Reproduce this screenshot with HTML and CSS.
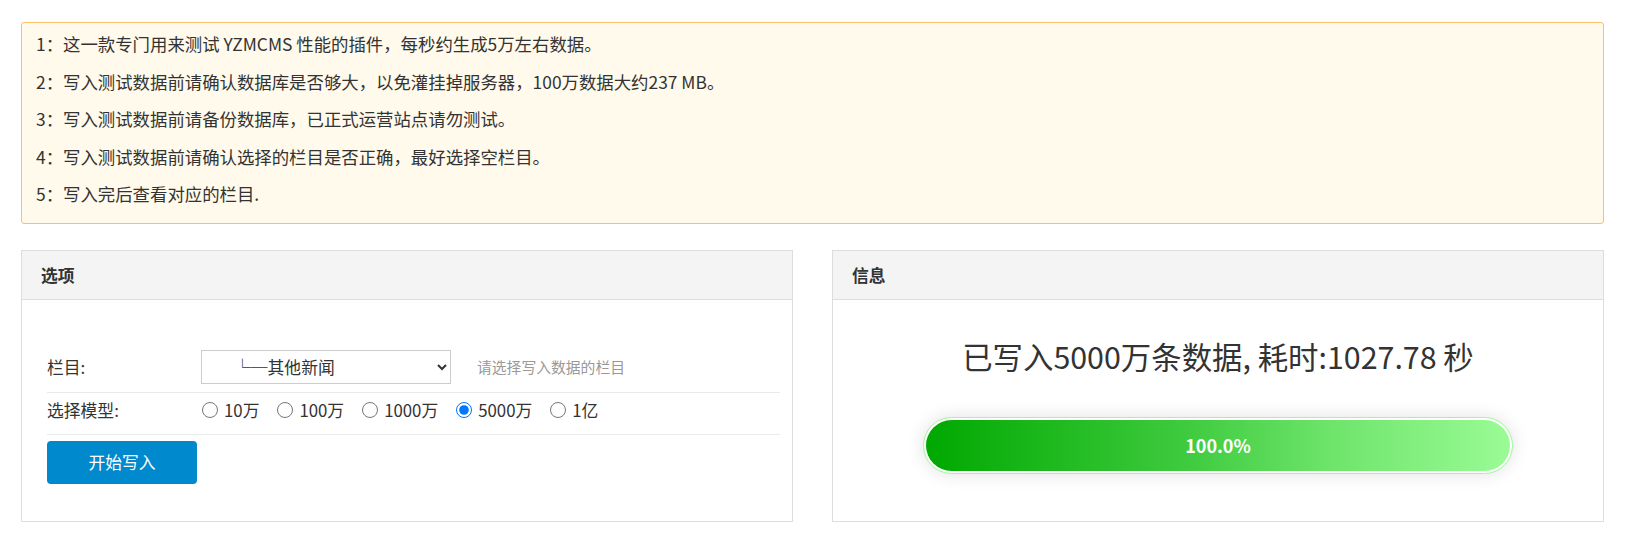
FILE: index.html
```html
<!DOCTYPE html>
<html lang="zh-CN">
<head>
<meta charset="utf-8">
<title>测试数据</title>
<link rel="stylesheet" href="styles.css">
</head>
<body>
<div class="page">
  <div class="alert">
    <p>1：这一款专门用来测试 YZMCMS 性能的插件，每秒约生成5万左右数据。</p>
    <p>2：写入测试数据前请确认数据库是否够大，以免灌挂掉服务器，100万数据大约237 MB。</p>
    <p>3：写入测试数据前请备份数据库，已正式运营站点请勿测试。</p>
    <p>4：写入测试数据前请确认选择的栏目是否正确，最好选择空栏目。</p>
    <p>5：写入完后查看对应的栏目.</p>
  </div>
  <div class="grid">
    <div class="panel">
      <div class="panel-head">选项</div>
      <div class="panel-body form-body">
        <div class="row row-cat">
          <div class="label">栏目:</div>
          <select class="select">
            <option>└─其他新闻</option>
          </select>
          <span class="hint">请选择写入数据的栏目</span>
        </div>
        <div class="row row-model">
          <div class="label">选择模型:</div>
          <div class="radios">
            <label class="radio"><input type="radio" name="m">10万</label>
            <label class="radio"><input type="radio" name="m">100万</label>
            <label class="radio"><input type="radio" name="m">1000万</label>
            <label class="radio"><input type="radio" name="m" checked>5000万</label>
            <label class="radio"><input type="radio" name="m">1亿</label>
          </div>
        </div>
        <button class="btn" type="button">开始写入</button>
      </div>
    </div>
    <div class="panel">
      <div class="panel-head">信息</div>
      <div class="panel-body info-body">
        <div class="result">已写入5000万条数据, 耗时:1027.78 秒</div>
        <div class="bar-wrap">
          <div class="bar">100.0%</div>
        </div>
      </div>
    </div>
  </div>
</div>
</body>
</html>
```

FILE: styles.css
```css
* {
  box-sizing: border-box;
}

body {
  margin: 0;
  background: #fff;
  color: #333;
  font-family: "Noto Sans CJK SC", "Noto Sans", sans-serif;
  font-size: 16.8px;
}

.page {
  padding: 22px 24px 0 21px;
}

.alert {
  border: 1px solid #fbbf6e;
  background: #fffaeb;
  border-radius: 3px;
  padding: 9px 14px 3px;
  font-size: 17.4px;
}

.alert p {
  margin: 0 0 13.6px;
  line-height: 24px;
}

.grid {
  display: grid;
  grid-template-columns: 1fr 1fr;
  gap: 39px;
  margin-top: 26px;
}

.panel {
  border: 1px solid #ddd;
  background: #fff;
}

.panel-head {
  height: 49px;
  line-height: 48px;
  padding: 0 19px;
  background: #f4f4f4;
  border-bottom: 1px solid #ddd;
  font-weight: bold;
  color: #333;
}

.panel-body {
  height: 221px;
}

.form-body {
  padding: 42px 12px 0 25px;
}

.row {
  display: flex;
  align-items: center;
  border-bottom: 1px solid #eaeaea;
}

.row-cat {
  height: 51px;
}

.row-model {
  height: 42px;
  align-items: flex-start;
  padding-top: 5px;
  line-height: 24px;
}

.label {
  width: 154px;
  flex: none;
}

.select {
  width: 250px;
  height: 34px;
  border: 1px solid #ccc;
  background: #fff;
  color: #333;
  font-family: inherit;
  font-size: 16.8px;
  padding: 0 6px 0 28px;
  border-radius: 0;
  margin-top: 1px;
}

.hint {
  margin-left: 26px;
  color: #999;
  font-size: 14.8px;
}

.radios {
  display: flex;
  align-items: center;
  gap: 17px;
}

.radio {
  display: inline-flex;
  align-items: center;
}

.radio input {
  width: 16px;
  height: 16px;
  margin: 0 6px 0 1px;
}

.btn {
  display: block;
  margin-top: 6px;
  width: 150px;
  height: 43px;
  border: none;
  border-radius: 4px;
  background: #0089cd;
  color: #fff;
  font-family: inherit;
  font-size: 16.8px;
}

.info-body {
  display: flex;
  flex-direction: column;
  align-items: center;
  padding-top: 36px;
}

.result {
  font-size: 30.4px;
  line-height: 40px;
  color: #333;
}

.bar-wrap {
  margin-top: 41px;
  width: 590px;
  border: 1px solid #9ef99c;
  border-radius: 29px;
  padding: 2px;
  background: #fff;
  box-shadow: 0 0 18px rgba(0, 0, 0, 0.12);
}

.bar {
  height: 51px;
  border-radius: 26px;
  background: linear-gradient(to right, #00a800 0%, #1cb81c 20%, #3fcb3f 45%, #6fe56c 70%, #9afb95 100%);
  color: #fff;
  font-weight: bold;
  font-size: 18px;
  line-height: 51px;
  text-align: center;
}
```
